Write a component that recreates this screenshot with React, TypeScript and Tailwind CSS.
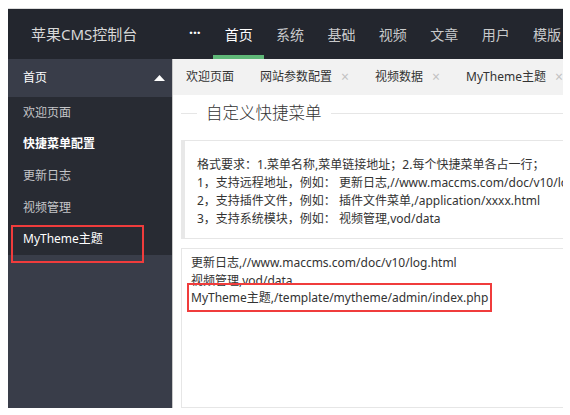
import React from "react";

const font = { fontFamily: '"Noto Sans", "Noto Sans CJK SC", sans-serif' };

function Tab({ label, closable }: { label: string; closable?: boolean }) {
  return (
    <div className="flex items-center h-full px-[13px] shrink-0">
      <span className="text-[12px] text-[#333]">{label}</span>
      {closable && <span className="ml-[9px] text-[14px] text-[#c2c2c2] leading-none">×</span>}
    </div>
  );
}

export default function App() {
  const navs = ["首页", "系统", "基础", "视频", "文章", "用户", "模版"];
  const items = ["欢迎页面", "快捷菜单配置", "更新日志", "视频管理", "MyTheme主题"];
  return (
    <div className="w-[570px] h-[415px] bg-white pt-2 pl-2 pr-[7px] pb-[7px]" style={font}>
      <div className="relative w-[555px] h-[400px] overflow-hidden border-t border-[#dcdcdc] flex flex-col">
        {/* header */}
        <div className="h-[50px] bg-[#23262e] flex items-center shrink-0 relative overflow-hidden">
          <div className="pl-[23px] w-[172px] shrink-0 text-[15px] text-[#d8d8d8] whitespace-nowrap">苹果CMS控制台</div>
          <div className="w-[33px] shrink-0 pl-[9px] text-[14px] text-white font-bold leading-none pb-[2px]">···</div>
          {navs.map((n, i) => (
            <div key={n} className="relative h-full w-[51.4px] shrink-0 flex items-center justify-center">
              <span className={`text-[14px] whitespace-nowrap ${i === 0 ? "text-white" : "text-[#c8c9cb]"}`}>{n}</span>
              {i === 0 && <div className="absolute left-0 right-0 bottom-0 h-[4px] bg-[#5fb878]" />}
            </div>
          ))}
        </div>
        <div className="flex flex-1 min-h-0">
          {/* sidebar */}
          <div className="w-[165px] shrink-0 bg-[#393d49] border-r border-[#c9c9c9] flex flex-col">
            <div className="h-[38px] flex items-center justify-between pl-[15px] pr-[7px]">
              <span className="text-[12px] text-white">首页</span>
              <svg width="11" height="6" viewBox="0 0 11 6"><path d="M0 6 L5.5 0 L11 6 Z" fill="#fff" /></svg>
            </div>
            <div className="bg-[#282b33]">
              {items.map((t, i) => (
                <div key={t} className="h-[31.6px] flex items-center pl-[15px]">
                  <span className={`text-[12px] ${i === 1 ? "text-white font-bold" : i === 4 ? "text-white" : "text-[#c4c5c8]"}`}>{t}</span>
                </div>
              ))}
            </div>
          </div>
          {/* main */}
          <div className="flex-1 min-w-0 overflow-hidden flex flex-col">
            <div className="h-[36px] bg-[#f2f2f2] flex items-center shrink-0 whitespace-nowrap">
              <Tab label="欢迎页面" />
              <Tab label="网站参数配置" closable />
              <Tab label="视频数据" closable />
              <Tab label="MyTheme主题" closable />
            </div>
            <div className="flex-1 min-h-0 pl-[8px] flex flex-col w-[460px]">
              <div className="flex items-center mt-[6px] h-[24px]">
                <div className="w-[16px] h-px bg-[#e6e6e6]" />
                <span className="px-[9px] text-[16.5px] font-light text-[#333] leading-[24px] whitespace-nowrap">自定义快捷菜单</span>
                <div className="flex-1 h-px bg-[#e6e6e6]" />
              </div>
              <div className="mt-[15px] border border-[#e6e6e6] border-l-[4px] border-l-[#e8e8e8] pl-[12px] pt-[15px] pb-[10px] text-[12px] leading-[18px] text-[#333] whitespace-nowrap">
                <div>格式要求：1.菜单名称,菜单链接地址；2.每个快捷菜单各占一行；</div>
                <div>1，支持远程地址，例如： 更新日志,//www.maccms.com/doc/v10/log.html</div>
                <div>2，支持插件文件，例如： 插件文件菜单,/application/xxxx.html</div>
                <div>3，支持系统模块，例如： 视频管理,vod/data</div>
              </div>
              <div className="mt-[9px] flex-1 border border-[#e6e6e6] px-[9px] pt-[5px] text-[12px] leading-[17.5px] text-[#333] whitespace-nowrap">
                <div>更新日志,//www.maccms.com/doc/v10/log.html</div>
                <div>视频管理,vod/data</div>
                <div>MyTheme主题,/template/mytheme/admin/index.php</div>
              </div>
            </div>
          </div>
        </div>
        {/* annotations */}
        <div className="absolute left-[3px] top-[216px] w-[133px] h-[38px] border-2 border-[#f03c3c]" />
        <div className="absolute left-[179px] top-[274px] w-[305px] h-[29px] border-2 border-[#f03c3c]" />
      </div>
    </div>
  );
}
